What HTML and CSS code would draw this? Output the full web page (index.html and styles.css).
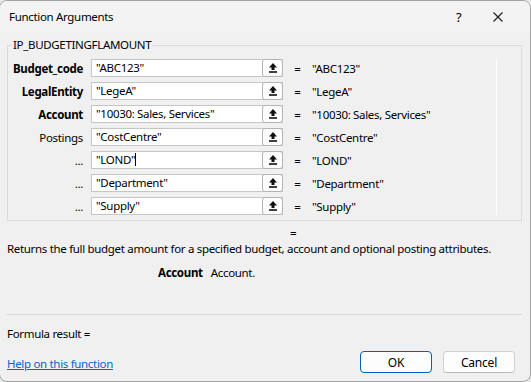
FILE: index.html
```html
<!DOCTYPE html>
<html lang="en">
<head>
<meta charset="UTF-8">
<title>Function Arguments</title>
<link rel="stylesheet" href="styles.css">
</head>
<body>

<div class="window">
  <div class="titlebar">
    <span class="title">Function Arguments</span>
    <span class="help-btn">?</span>
    <span class="close-btn">
      <svg width="10" height="10" viewBox="0 0 10 10"><path d="M0.5 0.5 L9.5 9.5 M9.5 0.5 L0.5 9.5" stroke="#1a1a1a" stroke-width="1.1" fill="none"/></svg>
    </span>
  </div>

  <div class="content">
    <fieldset class="args">
      <legend>IP_BUDGETINGFLAMOUNT</legend>
      <div class="rows" id="rows">
        <!-- argument rows -->
      </div>
    </fieldset>

    <div class="total">=</div>
    <p class="desc">Returns the full budget amount for a specified budget, account and optional posting attributes.</p>
    <div class="arg-help">
      <b>Account</b>
      <span>Account.</span>
    </div>

    <hr class="sep">

    <div class="result">Formula result =</div>
    <div class="footer">
      <a href="#" class="help-link">Help on this function</a>
      <div class="buttons">
        <button class="btn primary">OK</button>
        <button class="btn">Cancel</button>
      </div>
    </div>
  </div>
</div>

<script>
  const args = [
    { label: "Budget_code", bold: true, value: '"ABC123"' },
    { label: "LegalEntity", bold: true, value: '"LegeA"' },
    { label: "Account", bold: true, value: '"10030: Sales, Services"' },
    { label: "Postings", bold: false, value: '"CostCentre"' },
    { label: "...", bold: false, value: '"LOND"', cursor: true },
    { label: "...", bold: false, value: '"Department"' },
    { label: "...", bold: false, value: '"Supply"' }
  ];

  const arrow = '<svg width="8" height="10" viewBox="0 0 8 10"><path d="M4 0 L8 4.5 H5.5 V7 H2.5 V4.5 H0 Z" fill="#111"/><rect x="0" y="8.2" width="8" height="1.6" fill="#111"/></svg>';

  const rows = document.getElementById("rows");
  args.forEach(arg => {
    const row = document.createElement("div");
    row.classList.add("row");
    row.innerHTML = `
      <label class="${arg.bold ? "lbl bold" : "lbl"}">${arg.label}</label>
      <div class="field">
        <span class="text">${arg.value}${arg.cursor ? '<i class="caret"></i>' : ""}</span>
        <span class="pick">${arrow}</span>
      </div>
      <span class="eq">=</span>
      <span class="val">${arg.value}</span>
    `;
    rows.appendChild(row);
  });
</script>

</body>
</html>
```

FILE: styles.css
```css
body {
  margin: 0;
  background: #e8e8e8;
  font-family: "Noto Sans", "Segoe UI", sans-serif;
  font-size: 11.5px;
  letter-spacing: -0.32px;
  color: #000;
}
.window {
  width: 530px;
  height: 380px;
  margin-left: -1px;
  background: #f0f0f0;
  border: 1px solid #a3a3a3;
  border-radius: 8px;
  overflow: hidden;
}
.titlebar {
  height: 31px;
  display: flex;
  align-items: center;
  background: #f3f3f3;
  padding-left: 9px;
}
.title {
  flex: 1;
  line-height: 16px;
}
.help-btn {
  width: 10px;
  margin-right: 27px;
  font-size: 13px;
}
.close-btn {
  display: flex;
  margin-right: 27px;
  margin-top: 1px;
}
.content {
  padding: 0 8px 0 7px;
}
.args {
  margin: 5px 0 0;
  padding: 6px 0 5px 0;
  border: 1px solid #dcdcdc;
}
.args legend {
  margin-left: 4px;
  padding: 0 1px;
  line-height: 16px;
}
.rows {
  display: grid;
  row-gap: 5px;
  margin-right: 24px;
  border-right: 1px solid #fff;
}
.row {
  display: grid;
  grid-template-columns: 83px 192px 29px 1fr;
  align-items: center;
  height: 18px;
}
.row .eq {
  text-align: center;
}
.lbl {
  text-align: right;
  padding-right: 8px;
}
.bold {
  font-weight: bold;
}
.field {
  display: flex;
  height: 18px;
  box-sizing: border-box;
  background: #fff;
  border: 1px solid #c6c6c6;
}
.field .text {
  flex: 1;
  padding-left: 4px;
  line-height: 16px;
  white-space: nowrap;
}
.caret {
  display: inline-block;
  width: 1px;
  height: 13px;
  background: #000;
  vertical-align: -2px;
}
.pick {
  width: 21px;
  height: 18px;
  margin: -1px -1px 0 0;
  box-sizing: border-box;
  display: flex;
  align-items: center;
  justify-content: center;
  background: #fdfdfd;
  border: 1px solid #b4b4b4;
  border-radius: 3px;
}
.total {
  margin-top: 4px;
  padding-left: 283px;
  line-height: 16px;
}
.desc {
  margin: 0;
  line-height: 16px;
  white-space: nowrap;
}
.arg-help {
  display: flex;
  gap: 8px;
  margin-top: 8px;
  padding-left: 151px;
  line-height: 16px;
}
.sep {
  margin: 33px 0 0;
  border: none;
  border-top: 1px solid #d9d9d9;
}
.result {
  margin-top: 11px;
  line-height: 16px;
}
.footer {
  display: flex;
  justify-content: space-between;
  align-items: center;
  margin-top: 9px;
  padding-right: 7px;
}
.help-link {
  color: #0066cc;
  text-decoration: underline;
  margin-top: 3px;
}
.buttons {
  display: flex;
  gap: 11px;
}
.btn {
  width: 72px;
  height: 22px;
  font-family: inherit;
  font-size: 12px;
  letter-spacing: -0.2px;
  background: #fdfdfd;
  border: 1px solid #d0d0d0;
  border-bottom-color: #b8b8b8;
  border-radius: 4px;
  color: #000;
}
.btn.primary {
  border: 1px solid #005fb8;
}
```
